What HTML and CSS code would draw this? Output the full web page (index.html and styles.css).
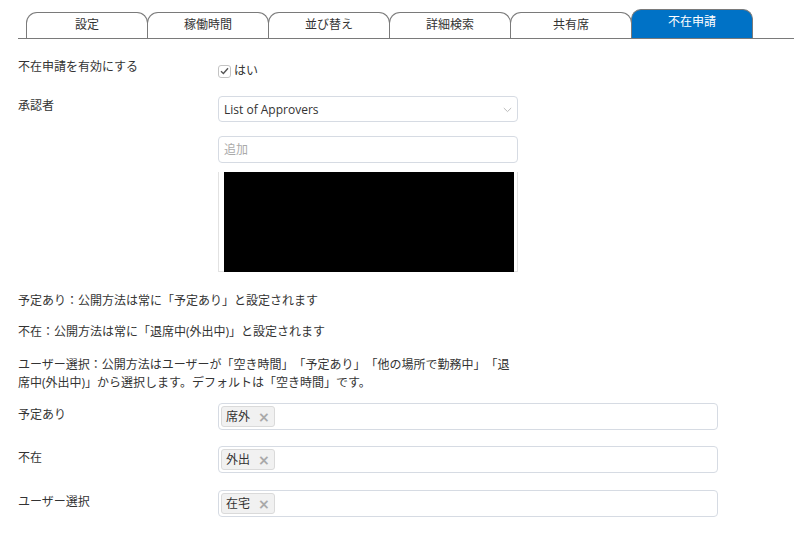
FILE: index.html
```html
<!DOCTYPE html>
<html lang="ja">
<head>
<meta charset="utf-8">
<title>不在申請</title>
<link rel="stylesheet" href="styles.css">
</head>
<body>
<div class="page">
  <div class="tabbar">
    <div class="tab">設定</div>
    <div class="tab">稼働時間</div>
    <div class="tab">並び替え</div>
    <div class="tab">詳細検索</div>
    <div class="tab">共有席</div>
    <div class="tab active">不在申請</div>
  </div>

  <div class="content">
    <div class="row row-enable">
      <div class="label">不在申請を有効にする</div>
      <div class="field field-check">
        <span class="checkbox"><svg width="9" height="8" viewBox="0 0 9 8"><path d="M1 4.2 L3.4 6.4 L8 1.2" fill="none" stroke="#555" stroke-width="1.4"/></svg></span>
        <span class="check-label">はい</span>
      </div>
    </div>

    <div class="row row-approver">
      <div class="label">承認者</div>
      <div class="field">
        <div class="select">
          <span>List of Approvers</span>
          <svg class="chev" width="9" height="6" viewBox="0 0 9 6"><path d="M0.8 1 L4.5 4.6 L8.2 1" fill="none" stroke="#bbb" stroke-width="1"/></svg>
        </div>
        <div class="input placeholder">追加</div>
        <div class="listbox"><div class="redacted"></div></div>
      </div>
    </div>

    <p class="note note-first">予定あり：公開方法は常に「予定あり」と設定されます</p>
    <p class="note">不在：公開方法は常に「退席中(外出中)」と設定されます</p>
    <p class="note note-wrap">ユーザー選択：公開方法はユーザーが「空き時間」「予定あり」「他の場所で勤務中」「退席中(外出中)」から選択します。デフォルトは「空き時間」です。</p>

    <div class="row row-tag row-tag-first">
      <div class="label">予定あり</div>
      <div class="field"><div class="taginput"><span class="tag">席外<span class="x">×</span></span></div></div>
    </div>
    <div class="row row-tag">
      <div class="label">不在</div>
      <div class="field"><div class="taginput"><span class="tag">外出<span class="x">×</span></span></div></div>
    </div>
    <div class="row row-tag row-tag-last">
      <div class="label">ユーザー選択</div>
      <div class="field"><div class="taginput"><span class="tag">在宅<span class="x">×</span></span></div></div>
    </div>
  </div>
</div>
</body>
</html>
```

FILE: styles.css
```css
* { box-sizing: border-box; }
html, body { margin: 0; padding: 0; background: #fff; }
body {
  font-family: "Open Sans", "Noto Sans CJK JP", sans-serif;
  font-size: 12px;
  color: #333;
  line-height: 18px;
  text-spacing-trim: space-all;
}
.page { padding-top: 9px; }

.tabbar {
  display: flex;
  align-items: flex-end;
  margin-left: 18px;
  padding-left: 8px;
  border-bottom: 1px solid #7a7a7a;
  height: 30px;
}
.tab {
  width: 122px;
  height: 26px;
  margin-left: -1px;
  border: 1px solid #7a7a7a;
  border-bottom: none;
  border-radius: 11px 11px 0 0;
  text-align: center;
  line-height: 24px;
  color: #333;
  background: #fff;
}
.tab:first-child { margin-left: 0; }
.tab.active {
  height: 29px;
  background: #0072c6;
  color: #fff;
  line-height: 24px;
  border-radius: 10px 10px 0 0;
}

.content { padding-left: 18px; }
.row { display: grid; grid-template-columns: 200px 1fr; }
.label { padding-top: 1px; }
.row-enable { margin-top: 19px; }
.row-enable .label { padding-top: 0; }
.field-check { display: flex; align-items: center; padding-top: 4px; height: 22px; }
.checkbox {
  width: 13px; height: 13px;
  border: 1px solid #c4c4c4;
  border-radius: 3px;
  display: inline-flex; align-items: center; justify-content: center;
  margin-right: 3px;
  background: #fff;
}
.check-label { line-height: 18px; }

.row-approver { margin-top: 16px; }
.select, .input {
  width: 300px;
  border: 1px solid #d6dbe3;
  border-radius: 4px;
  display: flex; align-items: center;
  padding-left: 5px;
}
.select { height: 26px; justify-content: space-between; padding-right: 5px; padding-top: 1px; }
.input { height: 27px; margin-top: 14px; }
.placeholder { color: #aaa; }
.listbox {
  width: 300px;
  height: 100px;
  margin-top: 10px;
  border: 1px solid #e2e2e2;
  border-top: none;
  padding: 0 3px 0 5px;
}
.redacted { height: 100px; margin-top: -1px; background: #000; }

.note { margin: 13px 0 0; width: 500px; }
.note-first { margin-top: 20px; }
.note-wrap { margin-top: 15px; }

.row-tag { margin-top: 16px; }
.row-tag-first { margin-top: 11px; }
.row-tag-last { margin-top: 17px; }
.row-tag .label { padding-top: 3px; }
.taginput {
  width: 500px;
  height: 27px;
  border: 1px solid #d6dbe3;
  border-radius: 4px;
  padding: 2px;
  display: flex; align-items: center;
}
.tag {
  display: inline-flex; align-items: center;
  height: 21px;
  padding: 0 4px 0 4px;
  background: #f1f1f1;
  border: 1px solid #dadada;
  border-radius: 3px;
  color: #333;
}
.tag .x {
  color: #a9a9a9;
  font-weight: bold;
  font-size: 14px;
  margin-left: 8px;
  font-family: "DejaVu Sans", sans-serif;
}
```
